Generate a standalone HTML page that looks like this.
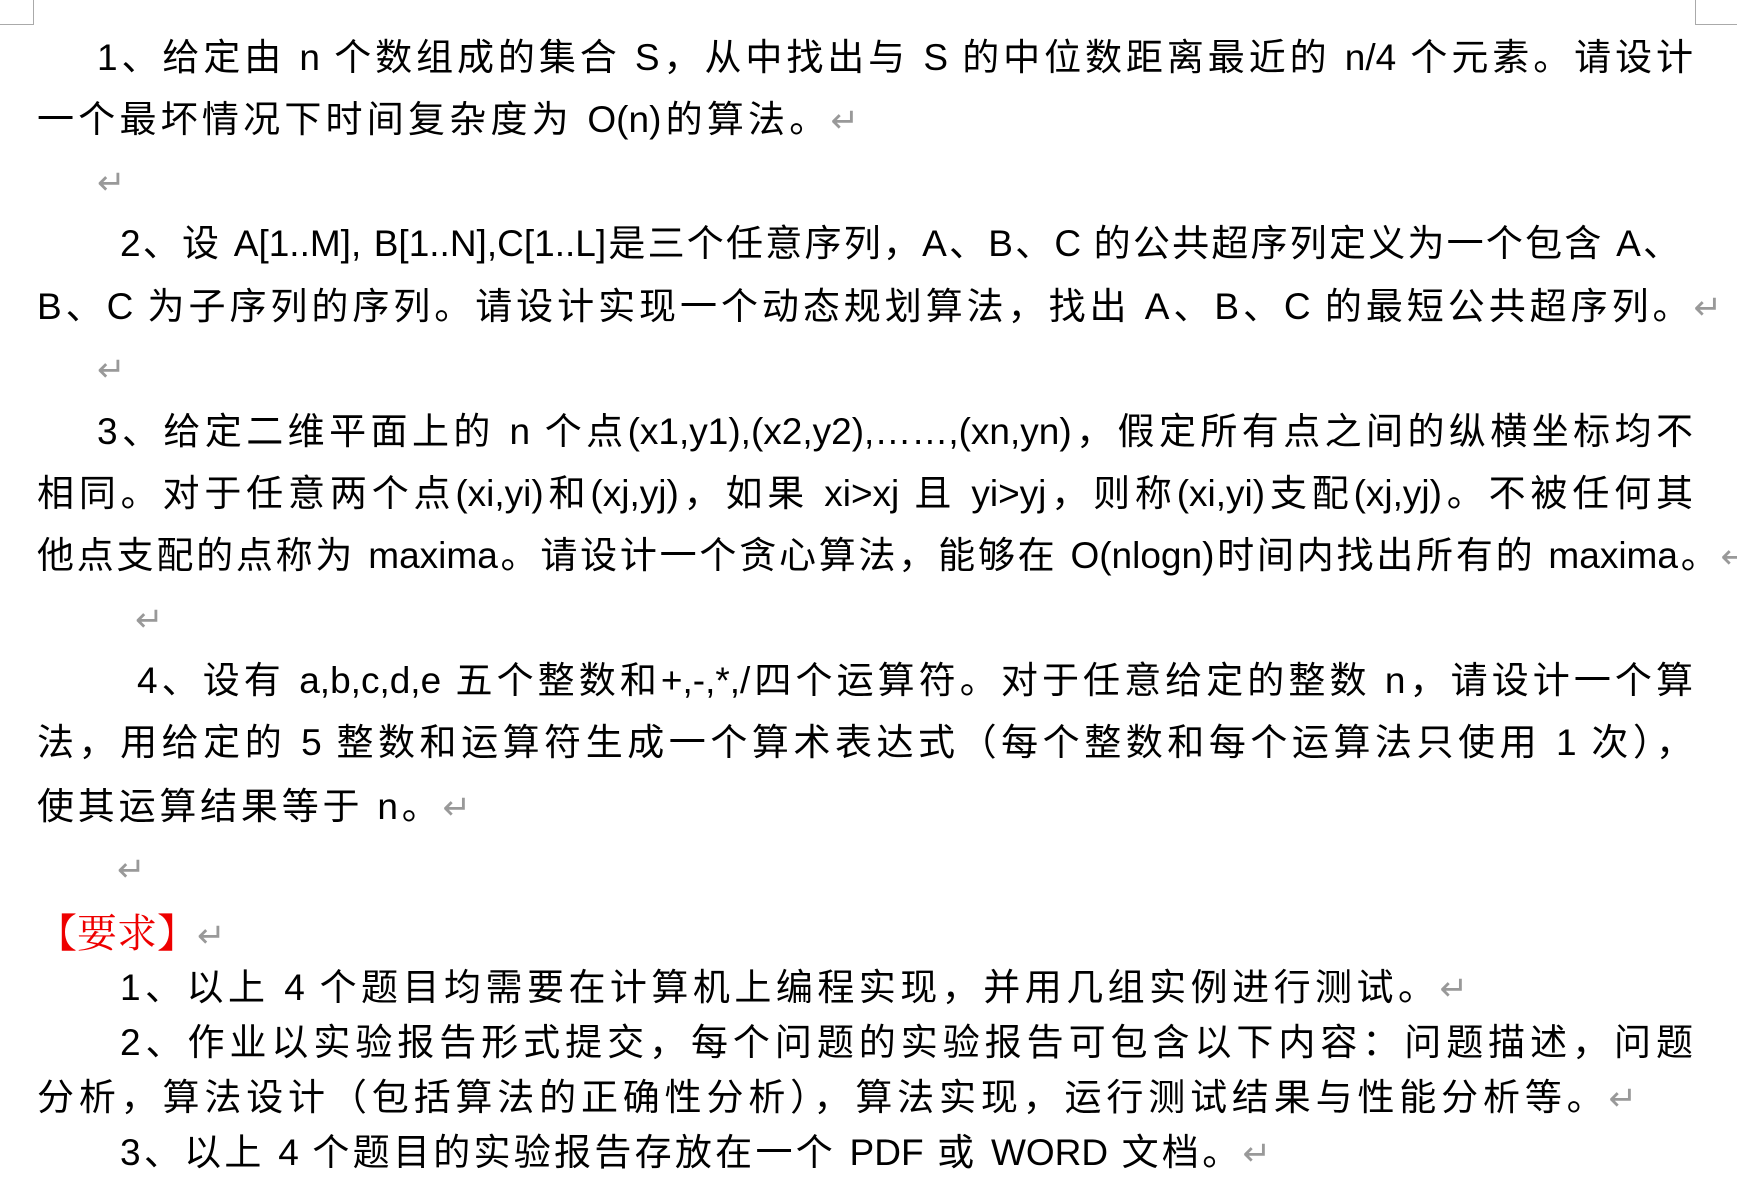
<!DOCTYPE html>
<html><head><meta charset="utf-8"><style>
html,body{margin:0;padding:0;background:#fff;}
body{width:1737px;height:1191px;position:relative;overflow:hidden;font-family:"Liberation Sans","Noto Sans CJK SC",sans-serif;color:#000;}
.l{position:absolute;height:62px;line-height:62px;font-size:37px;white-space:nowrap;text-align:justify;text-align-last:justify;}
.n{text-align:left;text-align-last:left;}
.a{color:#999;font-family:"DejaVu Sans",sans-serif;font-size:34px;}
.r{color:#e00;font-family:"Noto Serif CJK SC",serif;font-size:40px;}
.c{position:absolute;background:#aaa;}
</style></head><body>
<div class="c" style="left:33px;top:0;width:1px;height:24px"></div>
<div class="c" style="left:0;top:24px;width:34px;height:1px"></div>
<div class="c" style="left:1695px;top:0;width:1px;height:24px"></div>
<div class="c" style="left:1695px;top:24px;width:42px;height:1px"></div>

<div class="l" style="left:97px;top:27px;width:1596px">1、给定由 n 个数组成的集合 S，从中找出与 S 的中位数距离最近的 n/4 个元素。请设计</div>
<div class="l" style="left:37px;top:89px;width:822px">一个最坏情况下时间复杂度为 O(n)的算法。<span class="a">↵</span></div>
<div class="l n" style="left:97px;top:151px"><span class="a">↵</span></div>
<div class="l" style="left:120px;top:213px;width:1560px">2、设 A[1..M], B[1..N],C[1..L]是三个任意序列，A、B、C 的公共超序列定义为一个包含 A、</div>
<div class="l" style="left:37px;top:276px;width:1685px">B、C 为子序列的序列。请设计实现一个动态规划算法，找出 A、B、C 的最短公共超序列。<span class="a">↵</span></div>
<div class="l n" style="left:97px;top:338px"><span class="a">↵</span></div>
<div class="l" style="left:97px;top:401px;width:1596px">3、给定二维平面上的 n 个点(x1,y1),(x2,y2),……,(xn,yn)，假定所有点之间的纵横坐标均不</div>
<div class="l" style="left:37px;top:463px;width:1656px">相同。对于任意两个点(xi,yi)和(xj,yj)，如果 xi&gt;xj 且 yi&gt;yj，则称(xi,yi)支配(xj,yj)。不被任何其</div>
<div class="l" style="left:37px;top:525px;width:1712px">他点支配的点称为 maxima。请设计一个贪心算法，能够在 O(nlogn)时间内找出所有的 maxima。<span class="a">↵</span></div>
<div class="l n" style="left:135px;top:588px"><span class="a">↵</span></div>
<div class="l" style="left:137px;top:650px;width:1556px">4、设有 a,b,c,d,e 五个整数和+,-,*,/四个运算符。对于任意给定的整数 n，请设计一个算</div>
<div class="l" style="left:37px;top:712px;width:1656px">法，用给定的 5 整数和运算符生成一个算术表达式（每个整数和每个运算法只使用 1 次），</div>
<div class="l" style="left:37px;top:776px;width:434px">使其运算结果等于 n。<span class="a">↵</span></div>
<div class="l n" style="left:117px;top:838px"><span class="a">↵</span></div>
<div class="l n" style="left:37px;top:900px"><span class="r">【要求】</span><span class="a">↵</span></div>
<div class="l" style="left:120px;top:957px;width:1348px">1、以上 4 个题目均需要在计算机上编程实现，并用几组实例进行测试。<span class="a">↵</span></div>
<div class="l" style="left:120px;top:1012px;width:1573px">2、作业以实验报告形式提交，每个问题的实验报告可包含以下内容：问题描述，问题</div>
<div class="l" style="left:37px;top:1067px;width:1600px">分析，算法设计（包括算法的正确性分析），算法实现，运行测试结果与性能分析等。<span class="a">↵</span></div>
<div class="l" style="left:120px;top:1122px;width:1151px">3、以上 4 个题目的实验报告存放在一个 PDF 或 WORD 文档。<span class="a">↵</span></div>
</body></html>
